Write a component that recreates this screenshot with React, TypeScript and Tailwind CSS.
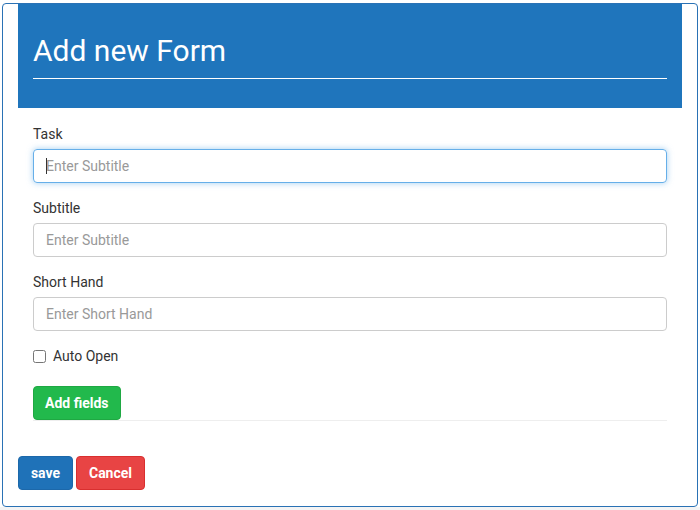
import { useState } from 'react';

const font = { fontFamily: 'Roboto, "Noto Sans", sans-serif' };

interface FieldProps {
  label: string;
  placeholder: string;
  focused?: boolean;
}

function Field({ label, placeholder, focused }: FieldProps) {
  return (
    <div className="mb-[15px]">
      <label className="mb-[5px] block text-[14px] leading-[20px] text-[#333]">{label}</label>
      <div className="relative">
        <input
          type="text"
          placeholder={placeholder}
          className={
            focused
              ? 'block h-[34px] w-full rounded-[4px] border border-[#66afe9] px-[12px] text-[14px] text-[#555] shadow-[0_0_6px_rgba(102,175,233,0.6)] outline-none placeholder:text-[#999]'
              : 'block h-[34px] w-full rounded-[4px] border border-[#ccc] px-[12px] text-[14px] text-[#555] outline-none placeholder:text-[#999]'
          }
        />
        {/* fake caret for the focused field */}
        {focused && <span className="absolute left-[13px] top-[9px] h-[16px] w-px bg-[#333]" />}
      </div>
    </div>
  );
}

export default function App() {
  const [autoOpen, setAutoOpen] = useState(false);

  return (
    <div className="flex h-[510px] w-[700px] flex-col bg-white" style={font}>
      <div className="pl-[2px] pr-[2px] pt-[3px]">
        <div className="h-[504px] w-[696px] rounded-[4px] border border-[#2a72b5] px-[15px]">
          {/* Header */}
          <div className="bg-[#1f75bc] px-[15px] pb-[29px] pt-[30px]">
            <h1 className="text-[30px] leading-[33px] font-normal text-white">Add new Form</h1>
            <div className="mt-[11px] h-px bg-white" />
          </div>

          {/* Body */}
          <div className="px-[15px] pt-[16px]">
            <Field label="Task" placeholder="Enter Subtitle" focused />
            <Field label="Subtitle" placeholder="Enter Subtitle" />
            <Field label="Short Hand" placeholder="Enter Short Hand" />

            <label className="flex h-[20px] items-center text-[14px] text-[#333]">
              <input
                type="checkbox"
                checked={autoOpen}
                onChange={() => setAutoOpen(!autoOpen)}
                className="m-0 h-[13px] w-[13px]"
              />
              <span className="ml-[7px]">Auto Open</span>
            </label>

            <button
              type="button"
              className="mt-[20px] h-[34px] rounded-[4px] border border-[#1fa843] bg-[#22b94c] px-[11px] text-[14px] font-bold text-white"
            >
              Add fields
            </button>
            <div className="h-px bg-[#eee]" />
          </div>

          {/* Footer */}
          <div className="mt-[35px] flex gap-[3px]">
            <button
              type="button"
              className="h-[34px] w-[55px] rounded-[4px] border border-[#1c68aa] bg-[#1f72b8] text-[14px] font-bold text-white"
            >
              save
            </button>
            <button
              type="button"
              className="h-[34px] w-[69px] rounded-[4px] border border-[#d92f2f] bg-[#e84444] text-[14px] font-bold text-white"
            >
              Cancel
            </button>
          </div>
        </div>
      </div>
      <div className="flex-1 bg-[#f4f4f4]" />
    </div>
  );
}
